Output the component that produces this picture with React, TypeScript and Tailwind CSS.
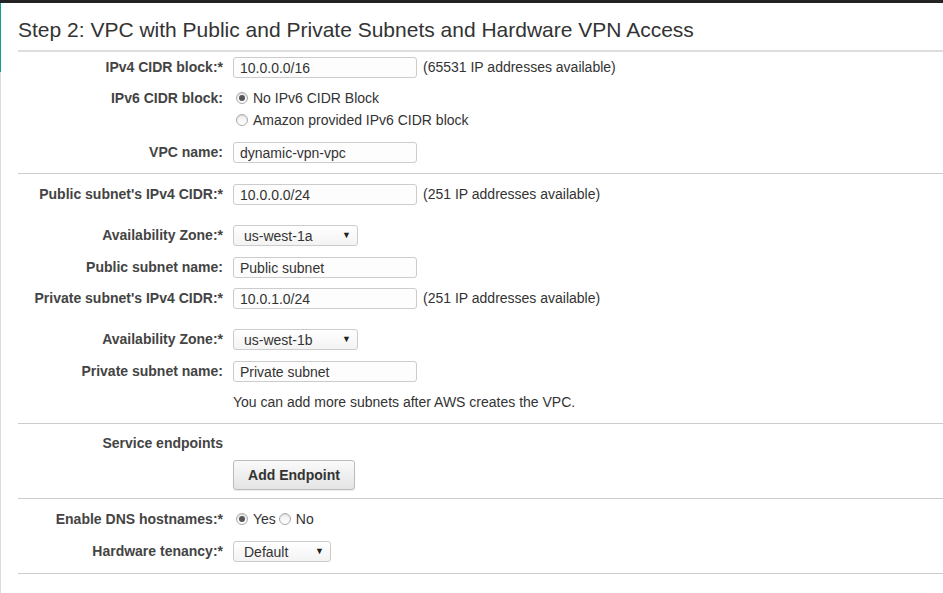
import { ReactNode } from "react";

const font = { fontFamily: '"Liberation Sans", Arial, sans-serif' };

function Label({ children }: { children: ReactNode }) {
  return (
    <div className="w-[205px] shrink-0 text-right font-bold text-[14px] text-[#444]">
      {children}
    </div>
  );
}

function TextInput({ value, width = 184 }: { value: string; width?: number }) {
  return (
    <div
      className="h-[21px] border border-[#ccc] rounded-[3px] bg-[#fdfdfd] pl-[6px] pt-[1px] text-[14px] leading-[18px] text-[#333]"
      style={{ width }}
    >
      {value}
    </div>
  );
}

function Select({ value, width }: { value: string; width: number }) {
  return (
    <div
      className="relative h-[21px] border border-[#ccc] rounded-[3px] bg-gradient-to-b from-[#fff] to-[#f3f3f3] pl-[10px] pt-[1px] text-[14px] leading-[18px] text-[#333]"
      style={{ width }}
    >
      {value}
      <span className="absolute right-[6px] top-[0px] text-[9px] leading-[19px] text-[#222]">▼</span>
    </div>
  );
}

function Radio({ checked }: { checked?: boolean }) {
  return (
    <span className="inline-flex w-[12px] h-[12px] items-center justify-center rounded-full border border-[#aaa] bg-gradient-to-b from-[#eee] to-[#fff] shadow-[inset_0_1px_1px_rgba(0,0,0,0.1)]">
      {checked && <span className="w-[6px] h-[6px] rounded-full bg-[#555]" />}
    </span>
  );
}

function Row({
  label,
  children,
  className,
}: {
  label?: ReactNode;
  children?: ReactNode;
  className?: string;
}) {
  return (
    <div className={"flex items-center " + (className ?? "")}>
      <Label>{label}</Label>
      <div className="ml-[10px] flex items-center">{children}</div>
    </div>
  );
}

function Hint({ children }: { children: ReactNode }) {
  return <span className="ml-[6px] text-[14px] text-[#333]">{children}</span>;
}

export default function App() {
  return (
    <div className="w-[943px] h-[593px] bg-white overflow-hidden text-[#333]" style={font}>
      <div className="h-[3px] bg-[#232323]" />
      <div className="flex h-[590px]">
        <div className="w-[1px] flex flex-col">
          <div className="h-[69px] bg-[#11a08e]" />
          <div className="flex-1 bg-[#dcdcd5]" />
        </div>
        <div className="flex-1 pl-[17px]">
          <h1 className="pt-[13px] pb-[6px] text-[21px] leading-[28px] text-[#333]">
            Step 2: VPC with Public and Private Subnets and Hardware VPN Access
          </h1>
          <div className="h-[2px] bg-[#ddd]" />

          <Row label="IPv4 CIDR block:*" className="mt-[5px] h-[21px]">
            <TextInput value="10.0.0.0/16" />
            <Hint>(65531 IP addresses available)</Hint>
          </Row>
          <div className="flex mt-[9px]">
            <div className="w-[205px] text-right font-bold text-[14px] leading-[22px] text-[#444]">
              IPv6 CIDR block:
            </div>
            <div className="ml-[13px] flex flex-col text-[14px] leading-[22px]">
              <div className="flex items-center gap-[5px]">
                <Radio checked />
                <span>No IPv6 CIDR Block</span>
              </div>
              <div className="flex items-center gap-[5px]">
                <Radio />
                <span>Amazon provided IPv6 CIDR block</span>
              </div>
            </div>
          </div>
          <Row label="VPC name:" className="mt-[11px] h-[21px]">
            <TextInput value="dynamic-vpn-vpc" />
          </Row>
          <div className="mt-[10px] h-[1px] bg-[#ccc]" />

          <Row label="Public subnet's IPv4 CIDR:*" className="mt-[10px] h-[21px]">
            <TextInput value="10.0.0.0/24" />
            <Hint>(251 IP addresses available)</Hint>
          </Row>
          <Row label="Availability Zone:*" className="mt-[20px] h-[21px]">
            <Select value="us-west-1a" width={125} />
          </Row>
          <Row label="Public subnet name:" className="mt-[11px] h-[21px]">
            <TextInput value="Public subnet" />
          </Row>
          <Row label="Private subnet's IPv4 CIDR:*" className="mt-[10px] h-[21px]">
            <TextInput value="10.0.1.0/24" />
            <Hint>(251 IP addresses available)</Hint>
          </Row>
          <Row label="Availability Zone:*" className="mt-[20px] h-[21px]">
            <Select value="us-west-1b" width={125} />
          </Row>
          <Row label="Private subnet name:" className="mt-[11px] h-[21px]">
            <TextInput value="Private subnet" />
          </Row>
          <Row className="mt-[9px] h-[22px]">
            <span className="text-[14px] text-[#333]">You can add more subnets after AWS creates the VPC.</span>
          </Row>
          <div className="mt-[10px] h-[1px] bg-[#ccc]" />

          <Row label="Service endpoints" className="mt-[9px] h-[20px]" />
          <Row className="mt-[7px] h-[30px]">
            <button className="h-[30px] w-[122px] rounded-[3px] border border-[#bbb] bg-gradient-to-b from-[#fafafa] to-[#e4e4e4] text-[14px] font-bold text-[#333] shadow-[0_1px_1px_rgba(0,0,0,0.08)]">
              Add Endpoint
            </button>
          </Row>
          <div className="mt-[8px] h-[1px] bg-[#ccc]" />

          <div className="flex items-center mt-[9px] h-[22px]">
            <Label>Enable DNS hostnames:*</Label>
            <div className="ml-[13px] flex items-center text-[14px]">
              <Radio checked />
              <span className="ml-[5px]">Yes</span>
              <span className="ml-[3px] flex">
                <Radio />
              </span>
              <span className="ml-[5px]">No</span>
            </div>
          </div>
          <Row label="Hardware tenancy:*" className="mt-[11px] h-[21px]">
            <Select value="Default" width={98} />
          </Row>
          <div className="mt-[11px] h-[1px] bg-[#ccc]" />
        </div>
      </div>
    </div>
  );
}
